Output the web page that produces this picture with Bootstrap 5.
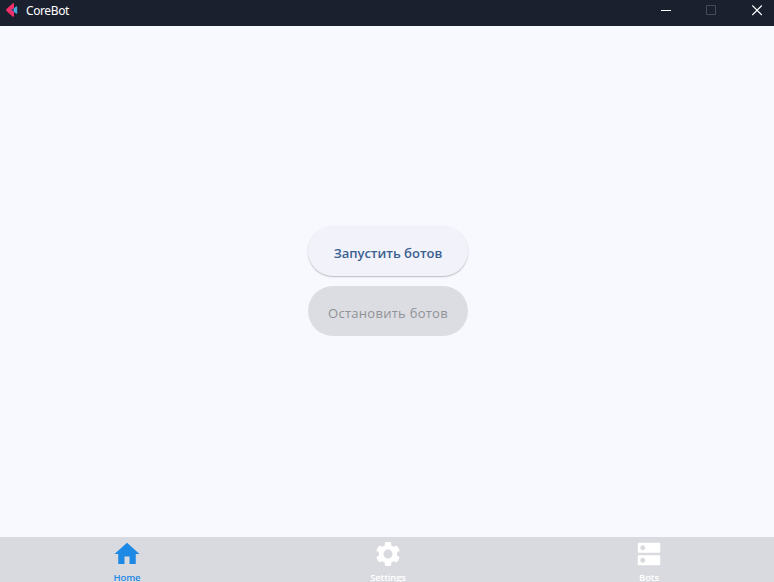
<!DOCTYPE html>
<html lang="ru">
<head>
<meta charset="utf-8">
<title>CoreBot</title>
<link href="https://cdn.jsdelivr.net/npm/bootstrap@5.3.0/dist/css/bootstrap.min.css" rel="stylesheet">
<style>
body { font-family: "Open Sans", "Noto Sans", sans-serif; background: #f8f9ff; }
.titlebar { height: 26px; background: #1b202f; padding: 0 11px 6px 5px; }
.app-name { font: 400 12px/20px "Noto Sans", sans-serif; letter-spacing: -.4px; margin-left: 8px; padding-top: 1px; }
.win-btns { gap: 35px; }
.bot-btn { width: 160px; height: 50px; border: 0; border-radius: 25px; font-size: 13px; line-height: 20px; padding: 4px 0 0; white-space: nowrap; }
.btn-start { background: #f1f2fa; color: #3a6190; font-weight: 600; box-shadow: 0 1px 1.5px rgba(0,0,0,.25); letter-spacing: -.02px; }
.btn-start:hover { background: #e9ecf7; color: #3a6190; }
.btn-stop, .btn-stop:disabled { background: #dcdde2; color: #909297; opacity: 1; letter-spacing: .27px; font-weight: 500; }
.stage { gap: 10px; padding-left: 2px; padding-bottom: 1px; }
.tabs { height: 45px; background: #d9dadf; padding: 2px 95px 0 97px; }
.tab { width: 60px; color: #fff; font-size: 9.500px; line-height: 10px; font-weight: 600; text-decoration: none; letter-spacing: -.15px; }
.tab svg { margin-bottom: 4px; flex: none; }
.tab.active { color: #1e88e5; }
</style>
<script src="https://cdn.jsdelivr.net/npm/bootstrap@5.3.0/dist/js/bootstrap.bundle.min.js"></script>
</head>
<body class="d-flex flex-column vh-100 overflow-hidden">
<header class="titlebar d-flex align-items-center text-white flex-shrink-0">
  <svg width="13" height="16" viewBox="0 0 13 16"><path d="M7.600 1.400Q9 .5 9 2.200v11.600q0 1.700-1.400.8L1.500 9Q.6 8 1.500 7z" fill="#f42f68"/><path d="M6 8l5.200-3.600q1-.5 1 .6v6q0 1.100-1 .6z" fill="#48a9dd"/><path d="M9 5.900v4.200L6 8z" fill="#553f78"/></svg>
  <span class="app-name">CoreBot</span>
  <div class="win-btns d-flex ms-auto">
    <svg width="11" height="11"><path d="M1 5.500h10" stroke="#fff"/></svg>
    <svg width="11" height="11"><path d="M.5.5h9v9h-9z" fill="none" stroke="#464b56"/></svg>
    <svg width="11" height="11"><path d="M.3.500l9.500 9.500M9.800.5L.3 10" stroke="#fff" stroke-width="1.100"/></svg>
  </div>
</header>
<main class="stage flex-fill d-flex flex-column align-items-center justify-content-center">
  <button class="btn bot-btn btn-start" type="button">Запустить ботов</button>
  <button class="btn bot-btn btn-stop" type="button" disabled>Остановить ботов</button>
</main>
<nav class="tabs d-flex justify-content-between flex-shrink-0">
  <a class="tab active d-flex flex-column align-items-center" href="#"><svg width="30" height="30" viewBox="0 0 24 24" fill="currentColor"><path d="M10 20v-6h4v6h5v-8h3L12 3 2 12h3v8z"/></svg>Home</a>
  <a class="tab d-flex flex-column align-items-center" href="#"><svg width="30" height="30" viewBox="0 0 24 24" fill="currentColor"><path d="M19.140 12.940c.04-.3.060-.61.060-.94 0-.32-.02-.64-.07-.94l2.030-1.580c.18-.14.23-.41.120-.61l-1.920-3.320c-.12-.22-.37-.29-.59-.22l-2.390.96c-.5-.38-1.030-.7-1.620-.94l-.36-2.540c-.04-.24-.24-.41-.48-.41h-3.840c-.24 0-.43.17-.47.41l-.36 2.540c-.59.24-1.130.57-1.620.94l-2.390-.96c-.22-.08-.47 0-.59.22L2.740 8.870c-.12.21-.08.47.120.61l2.030 1.580c-.05.3-.09.63-.09.94s.02.64.070.94l-2.030 1.580c-.18.14-.23.41-.12.61l1.920 3.320c.12.22.37.29.59.22l2.390-.96c.5.38 1.030.7 1.620.94l.36 2.540c.05.24.24.41.48.41h3.840c.24 0 .44-.17.47-.41l.36-2.540c.59-.24 1.130-.56 1.620-.94l2.390.96c.22.080.47 0 .59-.22l1.920-3.320c.12-.22.070-.47-.12-.61zM12 15.600c-1.980 0-3.600-1.620-3.600-3.600s1.620-3.600 3.600-3.600 3.600 1.620 3.600 3.600-1.620 3.600-3.600 3.600z"/></svg>Settings</a>
  <a class="tab d-flex flex-column align-items-center" href="#"><svg width="30" height="30" viewBox="0 0 24 24" fill="currentColor"><path d="M20 13H4c-.55 0-1 .45-1 1v6c0 .55.450 1 1 1h16c.55 0 1-.45 1-1v-6c0-.55-.45-1-1-1zM7 19c-1.100 0-2-.9-2-2s.9-2 2-2 2 .9 2 2-.9 2-2 2zM20 3H4c-.55 0-1 .45-1 1v6c0 .55.450 1 1 1h16c.55 0 1-.45 1-1V4c0-.55-.45-1-1-1zM7 9c-1.100 0-2-.9-2-2s.9-2 2-2 2 .9 2 2-.9 2-2 2z"/></svg>Bots</a>
</nav>
</body>
</html>
